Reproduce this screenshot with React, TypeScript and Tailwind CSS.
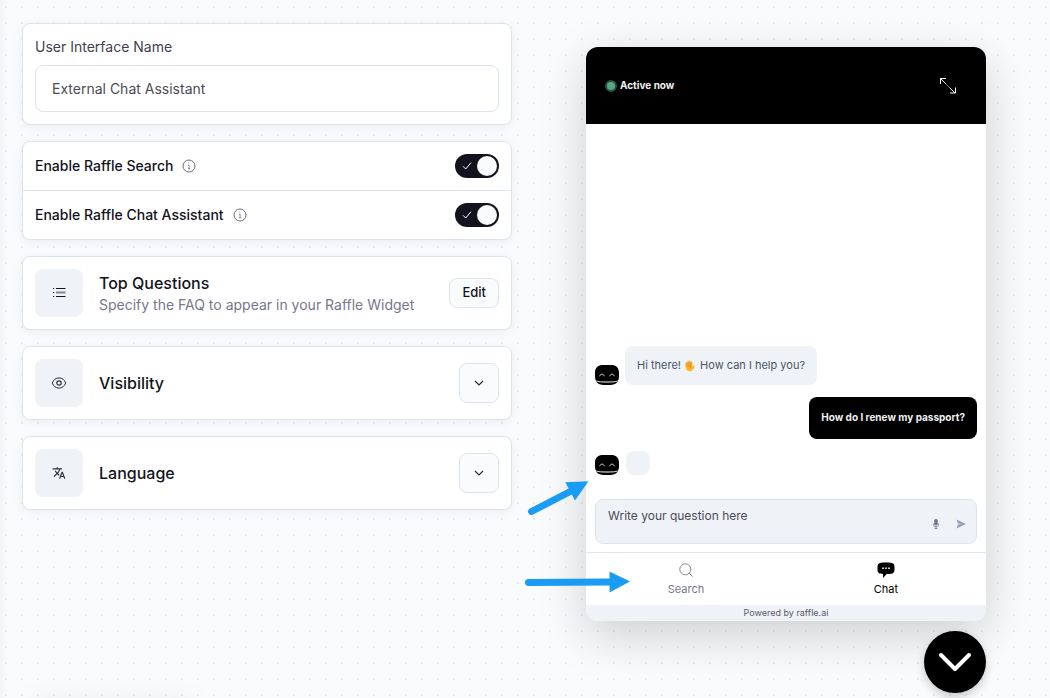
import { ReactNode, useState } from "react"
import { MdTranslate } from "react-icons/md"

const CARD = "rounded-lg border border-[#dde4ef] bg-white shadow-[0_2px_10px_rgba(120,135,150,0.12)]"

function InfoIcon() {
  return (
    <svg viewBox="0 0 14 14" className="h-[14px] w-[14px] text-[#6b6b80]" fill="none" stroke="currentColor" aria-hidden="true">
      <circle cx="7" cy="7" r="6" />
      <path d="M6 6.2h1.1v3.6M6 9.8h2.2M6.4 4h.9" strokeWidth=".8" />
    </svg>
  )
}

function ListIcon() {
  return (
    <svg viewBox="0 0 14 14" className="h-[14px] w-[14px]" stroke="#131320" fill="none" aria-hidden="true">
      <path d="M4 2.5h9.500M4 10.500h9.500M1 2.500h1.200M1 6.500h1.200M1 10.500h1.200" />
      <path d="M4 6.500h9.500" strokeWidth="2" stroke="#85858d" />
    </svg>
  )
}

function EyeIcon() {
  return (
    <svg viewBox="0 0 16 14" className="h-[14px] w-4" stroke="#2c2c38" fill="none" aria-hidden="true">
      <path d="M1.300 7C2.500 3.700 5 1.900 8 1.900S13.500 3.700 14.700 7C13.500 10.300 11 12.100 8 12.100S2.500 10.300 1.300 7z" />
      <circle cx="8" cy="7" r="2.200" strokeWidth="1.200" />
    </svg>
  )
}

function ChevronIcon() {
  return (
    <svg viewBox="0 0 10 6" className="h-[6px] w-[10px]" stroke="#2c2c38" strokeWidth="1.200" fill="none" aria-hidden="true">
      <path d="M1 1l4 4 4-4" />
    </svg>
  )
}

function BotAvatar() {
  return (
    <svg viewBox="0 0 24 20" className="h-5 w-6 shrink-0" fill="none" role="img" aria-label="Assistant">
      <path d="M8 0h8c5 0 8 2.500 8 8v3c0 2-.3 3.400-1 4.600C22.200 18.500 19 20 16 20H8c-3 0-6.200-1.500-7-4.400C.3 14.400 0 13 0 11V8c0-5.500 3-8 8-8z" fill="#000" />
      <path d="M4.300 11l2.700-2.200L9.700 11M14.300 11l2.700-2.200 2.700 2.200" stroke="#e5e5e5" strokeWidth=".9" />
      <path d="M1.500 16c2 .8 5 1 10.500 1s8.500-.2 10.500-1" stroke="#fff" />
    </svg>
  )
}

function HandIcon() {
  return (
    <svg viewBox="0 0 10 12" className="ml-1 mr-[2px] inline-block h-3 w-[10px] align-[-3px]" role="img" aria-label="Raised hand">
      <path d="M1.300 6V3M3.100 6V1.600M4.900 6V1.200M6.600 6V2.500" stroke="#fba91a" strokeWidth="1.500" strokeLinecap="round" />
      <path d="M.6 5h6.800v1.600c.6-.8 1.300-1.300 1.900-1 .6.300.2 1-.1 1.600C8.600 9 7.600 11.300 4.600 11.300 1.900 11.300.6 9.500.6 7z" fill="#fdbb2c" />
      <path d="M2.200 2.800v3M4 2v3.800M5.800 2.500v3.300M7 6.800c-1.800 0-2.700.8-2.700 2.400M2 6.400h4" stroke="#d57a12" strokeWidth=".6" fill="none" />
    </svg>
  )
}

interface ToggleRowProps {
  id: string
  label: string
}

function ToggleRow({ id, label }: ToggleRowProps) {
  const [on, setOn] = useState(true)
  return (
    <div className="flex items-center justify-between p-3">
      <div className="flex items-center gap-[9px]">
        <label htmlFor={id} className="text-sm font-medium text-[#131320]">{label}</label>
        <InfoIcon />
      </div>
      <div className="grid h-6 w-11 items-center">
        <input
          id={id}
          type="checkbox"
          role="switch"
          checked={on}
          onChange={() => setOn(!on)}
          className="peer col-start-1 row-start-1 h-6 w-11 cursor-pointer appearance-none rounded-full bg-[#a0a4b0] checked:bg-[#131320]"
        />
        <svg viewBox="0 0 10 8" className="pointer-events-none col-start-1 row-start-1 ml-[7px] h-2 w-[10px]" stroke="#fff" fill="none" aria-hidden="true">
          <path d="M1 4.300l2.700 2.700L9 .7" />
        </svg>
        <span className="pointer-events-none col-start-1 row-start-1 ml-[2px] h-5 w-5 rounded-full bg-[#fafbfd] peer-checked:ml-[22px]" />
      </div>
    </div>
  )
}

interface SettingCardProps {
  icon: ReactNode
  title: string
  description?: string
  action: ReactNode
}

function SettingCard({ icon, title, description, action }: SettingCardProps) {
  return (
    <section className={`${CARD} flex items-center gap-4 p-3`}>
      <div className="flex h-12 w-12 shrink-0 items-center justify-center rounded-lg bg-[#eff3f8]">{icon}</div>
      <div className="min-w-0 flex-1">
        <h2 className="text-base font-medium leading-6 text-[#131320]">{title}</h2>
        {description && <p className="truncate text-sm leading-5 text-[#77778a]">{description}</p>}
      </div>
      {action}
    </section>
  )
}

function ExpandButton({ label }: { label: string }) {
  return (
    <button type="button" aria-label={label} className="flex h-10 w-10 shrink-0 items-center justify-center rounded-lg border border-[#dde4ef] bg-[#fafbfd]">
      <ChevronIcon />
    </button>
  )
}

function ChatWidget() {
  return (
    <section className="flex flex-col overflow-hidden rounded-xl bg-white shadow-[0_14px_48px_rgba(0,0,0,0.18)]">
      <header className="flex h-[77px] items-center justify-between bg-black pl-[19px] pr-[30px] text-white">
        <p className="flex items-center gap-[3px] text-[10px] font-bold text-[#f0f0f0]">
          <span className="h-3 w-3 rounded-full border-2 border-[#27503f] bg-[#57a585]" />
          Active now
        </p>
        <button type="button" aria-label="Expand chat">
          <svg viewBox="0 0 16 16" className="h-4 w-4" stroke="#fff" fill="none" aria-hidden="true">
            <path d="M.5 6V.5H6M15.500 9.500v5.500H10" />
            <path d="M.5.500l5.500 5.500M9.500 9.500l5.500 5.500" strokeWidth=".9" />
            <path d="M6 6l3.500 3.500" strokeWidth=".5" />
          </svg>
        </button>
      </header>

      <div className="flex flex-col gap-3 px-[9px] pt-[222px]">
        <div className="flex items-end gap-[6px]">
          <BotAvatar />
          <p className="rounded-lg bg-[#eff3f8] px-3 py-[11px] text-[11px] leading-[17px] text-[#4b5563]">
            Hi there!<HandIcon /> How can I help you?
          </p>
        </div>
        <p className="self-end rounded-lg bg-black px-3 pb-[13px] pt-3 text-[10px] font-bold leading-[17px] text-[#f0f0f0]">
          How do I renew my passport?
        </p>
        <div className="flex items-end gap-[7px]">
          <BotAvatar />
          <span className="h-6 w-6 rounded-lg bg-[#eff3f8]" />
        </div>
      </div>

      <form className="mx-[9px] mb-2 mt-6 flex h-[45px] rounded-lg border border-[#dde4ef] bg-[#eff3f8] pl-3 pr-[10px]" onSubmit={(e) => e.preventDefault()}>
        <textarea
          aria-label="Your question"
          placeholder="Write your question here"
          rows={1}
          className="h-8 min-w-0 flex-1 resize-none bg-transparent pt-[6px] text-xs leading-5 text-[#4b4b55] outline-none placeholder:text-[#4b4b55]"
        />
        <div className="flex items-center gap-4 pt-[5px]">
          <button type="button" aria-label="Record a question">
            <svg viewBox="0 0 8 12" className="h-3 w-2" fill="#74748a" aria-hidden="true">
              <rect x="2.200" y="1" width="3.600" height="6.600" rx="1.800" />
              <path d="M1.200 5.500c0 4.300 5.600 4.300 5.600 0M4 8.800v2M2.500 10.500h3" stroke="#74748a" strokeWidth=".8" fill="none" />
            </svg>
          </button>
          <button type="submit" aria-label="Send">
            <svg viewBox="0 0 10 10" className="h-[10px] w-[10px]" fill="#94a3b8" aria-hidden="true">
              <path d="M.5.600L10 5 .5 9.400 1.800 5.600 6 5 1.800 4.400z" />
            </svg>
          </button>
        </div>
      </form>

      <nav className="grid h-[53px] grid-cols-2 border-t border-[#e2e5ec] text-[11px] leading-4">
        <button type="button" className="flex flex-col items-center gap-[3px] pt-[9px] text-[#77778a]">
          <svg viewBox="0 0 16 16" className="h-4 w-4" stroke="#77778a" fill="none" aria-hidden="true">
            <circle cx="7.300" cy="7.300" r="5.500" strokeWidth=".9" />
            <path d="M11.200 11.200l3.300 3.300" />
          </svg>
          Search
        </button>
        <button type="button" className="flex flex-col items-center gap-[3px] pt-[9px] text-black">
          <svg viewBox="0 0 18 16" className="h-4 w-[18px]" aria-hidden="true">
            <path d="M4 .8C7 .3 11 .3 14 .8c2.500.4 3.500 1.800 3.500 4v3c0 2.400-1 3.800-3.500 4-1.500.2-3 .3-4.300.3L6 15.900V12c-3.600-.2-5.500-1-5.500-4.200v-3C.5 2.600 1.500 1.200 4 .8z" />
            <path d="M5.200 5.500h1.600v1.600H5.200zM8.200 5.500h1.600v1.600H8.200zM11.200 5.500h1.600v1.600h-1.600z" fill="#fff" />
          </svg>
          Chat
        </button>
      </nav>
      <footer className="bg-[#eff3f8] text-center text-[9px] leading-4 text-[#5a5a66]">Powered by raffle.ai</footer>
    </section>
  )
}

function PointerArrows() {
  return (
    <svg viewBox="0 0 110 120" className="pointer-events-none absolute -left-[62px] top-[476px] h-[120px] w-[110px]" fill="#1a9cf5" aria-hidden="true">
      <path d="M7.500 35.500L50 13.500" stroke="#1a9cf5" strokeWidth="7" strokeLinecap="round" />
      <path d="M41.300 6.300L64.500 5.300 51 24.500z" />
      <path d="M4.500 106.500L86 106" stroke="#1a9cf5" strokeWidth="7" strokeLinecap="round" />
      <path d="M85.500 95.500L106 105.600 85.500 116.500z" />
    </svg>
  )
}

export default function App() {
  return (
    <main className="relative min-h-screen overflow-hidden bg-[#fafbfd] bg-[radial-gradient(circle_at_1px_1px,#e8eaed_1px,transparent_0)] bg-size-[16px_16px] bg-position-[5px_6px] font-['Inter',sans-serif]">
      <div className="absolute inset-y-0 left-0 w-2 bg-gradient-to-r from-black/3 to-transparent" />
      <div className="absolute -bottom-5 left-8 h-4 w-40 shadow-[0_0_24px_rgba(80,110,100,0.12)]" />

      <div className="flex items-start gap-[74px] pl-[22px] pr-16">
        <div className="flex min-w-0 flex-1 flex-col gap-4 pt-[23px]">
          <section className={`${CARD} p-3`}>
            <label htmlFor="ui-name" className="mb-[7px] block text-sm leading-[22px] text-[#3f3f50]">User Interface Name</label>
            <input
              id="ui-name"
              type="text"
              defaultValue="External Chat Assistant"
              className="block h-[47px] w-full rounded-lg border border-[#dde4ef] bg-white px-4 text-sm text-[#4b4b55] outline-none"
            />
          </section>

          <section className={`${CARD} divide-y divide-[#dde4ef]`}>
            <ToggleRow id="enable-search" label="Enable Raffle Search" />
            <ToggleRow id="enable-chat" label="Enable Raffle Chat Assistant" />
          </section>

          <SettingCard
            icon={<ListIcon />}
            title="Top Questions"
            description="Specify the FAQ to appear in your Raffle Widget"
            action={
              <button type="button" className="h-[30px] shrink-0 rounded-lg border border-[#dde4ef] bg-[#fafbfd] px-3 text-[13px] font-medium text-[#131320]">
                Edit
              </button>
            }
          />
          <SettingCard icon={<EyeIcon />} title="Visibility" action={<ExpandButton label="Show visibility settings" />} />
          <SettingCard icon={<MdTranslate className="h-[14px] w-[14px] text-[#2c2c38]" />} title="Language" action={<ExpandButton label="Show language settings" />} />
        </div>

        <div className="relative flex w-[400px] shrink-0 flex-col gap-[10px] pt-[47px]">
          <ChatWidget />
          <button type="button" aria-label="Close chat" className="flex h-[62px] w-[62px] items-center justify-center self-end rounded-full bg-black shadow-[0_4px_10px_rgba(0,0,0,0.2)]">
            <svg viewBox="0 0 34 20" className="h-5 w-[34px]" stroke="#fff" strokeWidth="4" strokeLinecap="round" strokeLinejoin="round" fill="none" aria-hidden="true">
              <path d="M3 3l14 14L31 3" />
            </svg>
          </button>
          <PointerArrows />
        </div>
      </div>
    </main>
  )
}
